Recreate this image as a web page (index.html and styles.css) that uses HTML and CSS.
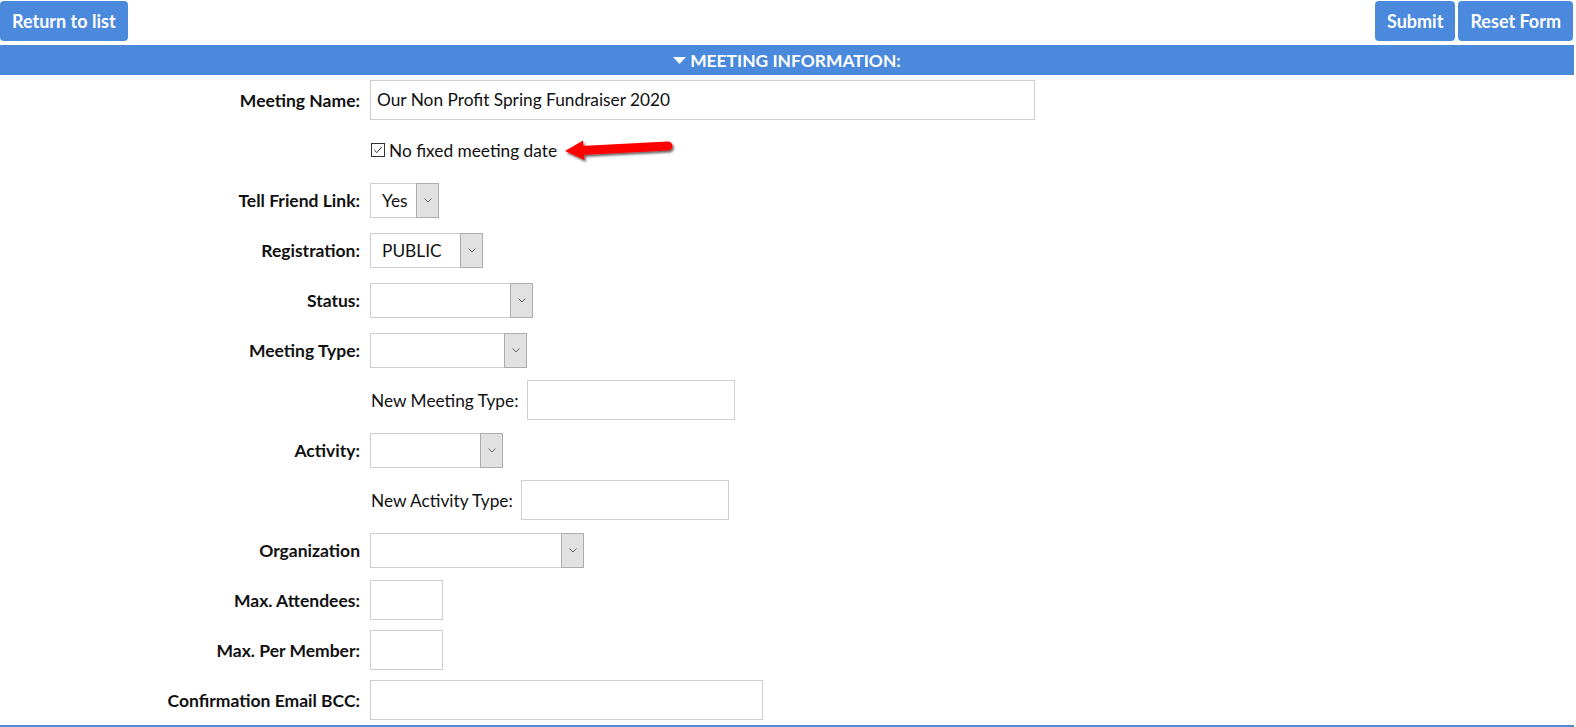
FILE: index.html
```html
<!DOCTYPE html>
<html>
<head>
<meta charset="utf-8">
<link rel="stylesheet" href="styles.css">
</head>
<body>
<div class="page">
  <div class="toolbar">
    <button class="btn">Return to list</button>
    <div class="toolbar-right">
      <button class="btn">Submit</button>
      <button class="btn">Reset Form</button>
    </div>
  </div>
  <div class="section-head">
    <svg class="caret" width="13" height="7" viewBox="0 0 13 7"><path d="M0 0 H13 L6.5 7 Z" fill="#fff"/></svg>
    <span>MEETING INFORMATION:</span>
  </div>
  <div class="form">
    <div class="row">
      <div class="lbl">Meeting Name:</div>
      <div class="field"><div class="input w-name">Our Non Profit Spring Fundraiser 2020</div></div>
    </div>
    <div class="row">
      <div class="lbl"></div>
      <div class="field">
        <span class="checkbox"><svg width="12" height="12" viewBox="0 0 12 12"><path d="M2.2 6 L4.8 8.6 L9.8 3" fill="none" stroke="#333" stroke-width="1"/></svg></span>
        <span class="check-text">No fixed meeting date</span>
        <svg class="arrow" width="112" height="26" viewBox="0 0 112 26">
          <defs>
            <filter id="sh" x="-10%" y="-30%" width="130%" height="180%">
              <feDropShadow dx="1.5" dy="2" stdDeviation="1.2" flood-color="#000" flood-opacity="0.6"/>
            </filter>
          </defs>
          <g filter="url(#sh)" fill="#ff0000">
            <path d="M18 12.5 L105 8" stroke="#ff0000" stroke-width="9" stroke-linecap="round"/>
            <path d="M2 13 L20 2.5 L21.5 22 Z"/>
          </g>
        </svg>
      </div>
    </div>
    <div class="row">
      <div class="lbl">Tell Friend Link:</div>
      <div class="field"><div class="select w-tell"><span class="val">Yes</span><span class="arr"><svg width="8" height="5" viewBox="0 0 8 5"><path d="M0.5 0.5 L4 4 L7.5 0.5" fill="none" stroke="#555" stroke-width="0.9"/></svg></span></div></div>
    </div>
    <div class="row">
      <div class="lbl">Registration:</div>
      <div class="field"><div class="select w-reg"><span class="val">PUBLIC</span><span class="arr"><svg width="8" height="5" viewBox="0 0 8 5"><path d="M0.5 0.5 L4 4 L7.5 0.5" fill="none" stroke="#555" stroke-width="0.9"/></svg></span></div></div>
    </div>
    <div class="row">
      <div class="lbl">Status:</div>
      <div class="field"><div class="select w-status"><span class="val"></span><span class="arr"><svg width="8" height="5" viewBox="0 0 8 5"><path d="M0.5 0.5 L4 4 L7.5 0.5" fill="none" stroke="#555" stroke-width="0.9"/></svg></span></div></div>
    </div>
    <div class="row">
      <div class="lbl">Meeting Type:</div>
      <div class="field"><div class="select w-mtype"><span class="val"></span><span class="arr"><svg width="8" height="5" viewBox="0 0 8 5"><path d="M0.5 0.5 L4 4 L7.5 0.5" fill="none" stroke="#555" stroke-width="0.9"/></svg></span></div></div>
    </div>
    <div class="row">
      <div class="lbl"></div>
      <div class="field"><span class="sub-lbl">New Meeting Type:</span><div class="input w-new"></div></div>
    </div>
    <div class="row">
      <div class="lbl">Activity:</div>
      <div class="field"><div class="select w-act"><span class="val"></span><span class="arr"><svg width="8" height="5" viewBox="0 0 8 5"><path d="M0.5 0.5 L4 4 L7.5 0.5" fill="none" stroke="#555" stroke-width="0.9"/></svg></span></div></div>
    </div>
    <div class="row">
      <div class="lbl"></div>
      <div class="field"><span class="sub-lbl">New Activity Type:</span><div class="input w-new"></div></div>
    </div>
    <div class="row">
      <div class="lbl">Organization</div>
      <div class="field"><div class="select w-org"><span class="val"></span><span class="arr"><svg width="8" height="5" viewBox="0 0 8 5"><path d="M0.5 0.5 L4 4 L7.5 0.5" fill="none" stroke="#555" stroke-width="0.9"/></svg></span></div></div>
    </div>
    <div class="row">
      <div class="lbl">Max. Attendees:</div>
      <div class="field"><div class="input w-small"></div></div>
    </div>
    <div class="row">
      <div class="lbl">Max. Per Member:</div>
      <div class="field"><div class="input w-small"></div></div>
    </div>
    <div class="row">
      <div class="lbl">Confirmation Email BCC:</div>
      <div class="field"><div class="input w-bcc"></div></div>
    </div>
  </div>
</div>
</body>
</html>
```

FILE: styles.css
```css
html, body {
  margin: 0;
  padding: 0;
  background: #fff;
}
body {
  font-family: Lato, "Liberation Sans", sans-serif;
  font-size: 17.3px;
  color: #111;
}
.page {
  width: 1574px;
  overflow: hidden;
  height: 727px;
}
.toolbar {
  display: flex;
  justify-content: space-between;
  align-items: flex-start;
  padding-top: 1px;
  height: 45px;
  box-sizing: border-box;
}
.toolbar-right {
  display: flex;
  gap: 3px;
  margin-right: 1px;
}
.btn {
  background: #4a89dc;
  color: #fff;
  border: none;
  border-radius: 4px;
  height: 40px;
  padding: 0 12px;
  font-family: Lato, "Liberation Sans", sans-serif;
  font-weight: bold;
  font-size: 18px;
  line-height: 38px;
  margin: 0;
}
.section-head {
  background: #4a89dc;
  height: 30px;
  display: flex;
  align-items: center;
  justify-content: center;
  gap: 4px;
  color: #fff;
  font-weight: bold;
  font-size: 17.4px;
}
.section-head .caret {
  margin-top: 1px;
}
.form {
  border-bottom: 2px solid #4a89dc;
}
.row {
  display: flex;
  align-items: center;
  height: 50px;
}
.lbl {
  width: 370px;
  flex: none;
  box-sizing: border-box;
  padding-right: 10px;
  text-align: right;
  font-weight: bold;
  font-size: 17.5px;
}
.field {
  display: flex;
  align-items: center;
}
.input {
  height: 40px;
  box-sizing: border-box;
  border: 1px solid #cfcfcf;
  padding: 0 6px;
  line-height: 38px;
  background: #fff;
}
.w-name { width: 665px; }
.w-new { width: 208px; }
.w-small { width: 73px; }
.w-bcc { width: 393px; }
.sub-lbl {
  margin-left: 1px;
  margin-right: 8px;
}
.select {
  height: 35px;
  box-sizing: border-box;
  border: 1px solid #cfcfcf;
  display: flex;
  background: #fff;
}
.select .val {
  flex: 1;
  padding-left: 11px;
  line-height: 33px;
}
.select .arr {
  width: 21px;
  flex: none;
  margin: -1px -1px -1px 0;
  background: #e1e1e1;
  border: 1px solid #adadad;
  display: flex;
  align-items: center;
  justify-content: center;
}
.w-tell { width: 69px; }
.w-reg { width: 113px; }
.w-status { width: 163px; }
.w-mtype { width: 157px; }
.w-act { width: 133px; }
.w-org { width: 214px; }
.checkbox {
  width: 14px;
  height: 14px;
  box-sizing: border-box;
  border: 1px solid #333;
  margin-left: 1px;
  margin-right: 4px;
  display: flex;
  align-items: center;
  justify-content: center;
  background: #fff;
}
.check-text {
  margin-right: 6px;
}
.arrow {
  margin-top: 2px;
}
```
